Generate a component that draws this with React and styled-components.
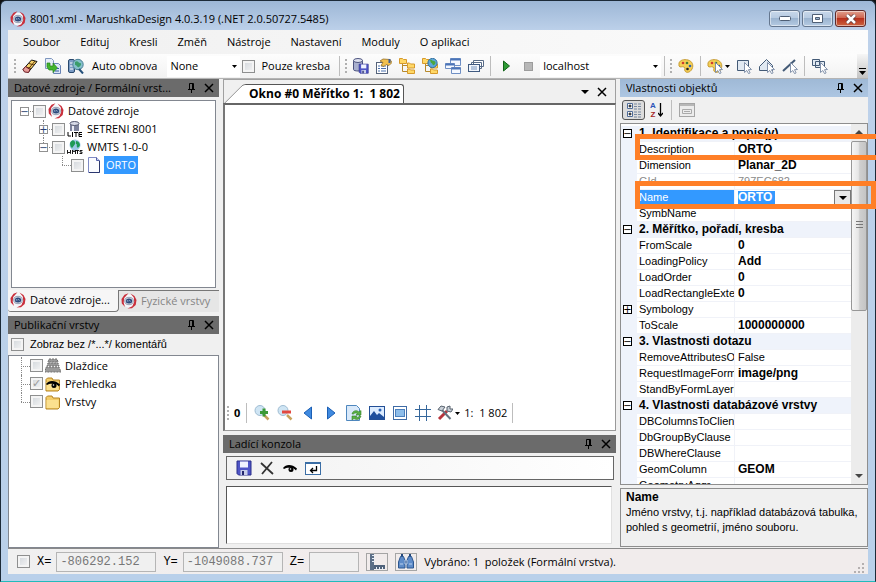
import React, { useState } from "react";
import styled, { createGlobalStyle } from "styled-components";

const MENU = ["Soubor", "Edituj", "Kresli", "Změň", "Nástroje", "Nastavení", "Moduly", "O aplikaci"];

const PROPERTIES = [
  { category: "1. Identifikace a popis(y)" },
  { name: "Description", value: "ORTO" },
  { name: "Dimension", value: "Planar_2D" },
  { name: "GId", value: "797EC682", disabled: true },
  { name: "Name", value: "ORTO", selected: true },
  { name: "SymbName", value: "" },
  { category: "2. Měřítko, pořadí, kresba" },
  { name: "FromScale", value: "0" },
  { name: "LoadingPolicy", value: "Add" },
  { name: "LoadOrder", value: "0" },
  { name: "LoadRectangleExte", value: "0" },
  { name: "Symbology", value: "", expandable: true },
  { name: "ToScale", value: "1000000000" },
  { category: "3. Vlastnosti dotazu" },
  { name: "RemoveAttributesOr", value: "False", plain: true },
  { name: "RequestImageForma", value: "image/png" },
  { name: "StandByFormLayerG", value: "" },
  { category: "4. Vlastnosti databázové vrstvy" },
  { name: "DBColumnsToClient", value: "" },
  { name: "DbGroupByClause", value: "" },
  { name: "DBWhereClause", value: "" },
  { name: "GeomColumn", value: "GEOM" },
  { name: "GeometryAggr", value: "" },
];

const Icon = ({ size = 16, children }) => (
  <svg width={size} height={size} viewBox="0 0 16 16" fill="none" aria-hidden="true">
    {children}
  </svg>
);

const LogoIcon = () => (
  <Icon>
    <circle cx="8" cy="8" r="6.500" fill="#f6f6fa" />
    <path d="M7.500.3 3.500 1.800.5 6l.3 4.500L4 14l-1.300-4.200L3.200 5z" fill="#c9303c" />
    <path d="M9.500.6 13.500 3l2 4-.8 5-3.700 3.200-4.500.3 4.800-2.300L13.200 9l-.4-4.500z" fill="#c9303c" />
    <ellipse cx="8" cy="8" rx="4.300" ry="3.700" fill="#d3d8e2" stroke="#8791a6" strokeWidth=".8" />
    <ellipse cx="8" cy="8" rx="3.200" ry="2.500" fill="#2c4a7c" />
    <path d="M6.200 8.500v-1l1 .8.9-.9 1.600 1" stroke="#b9c8e0" strokeWidth=".7" />
  </Icon>
);

const EraserIcon = () => (
  <Icon>
    <path d="M1 11.500 9.500 2l5.500 1.500L6.500 14z" fill="#f7d36b" stroke="#111" />
    <path d="m4 9 5 1.500M7 5.500l5 1.500M5.500 12 13 3" stroke="#5c3608" />
    <path d="m1 11.500 2.500-3 4.500 3L6.500 14.500l-4-.5z" fill="#e59a97" stroke="#6d1d24" />
  </Icon>
);

const CopyIcon = () => (
  <Icon>
    <path d="M.5.500h6l2 2v8h-8z" fill="#e6edf8" stroke="#7e96be" />
    <path d="M8.500 5.500h5l2 2v8h-7z" fill="#dbe6f8" stroke="#6883b5" />
    <path d="M2 5h3v3h3V5l4.500 5L8 14.500V12H4L2 9z" fill="#43b52c" stroke="#23811a" strokeWidth=".7" />
    <path d="M10 13h4M12 10.500h2" stroke="#345a9c" />
  </Icon>
);

const RefreshMapIcon = () => (
  <Icon>
    <rect x=".5" y="1.500" width="6" height="13" rx="1.500" fill="#7b9cc5" stroke="#28486d" />
    <path d="M2 5h3M2 8h3M2 11h3" stroke="#fff" />
    <circle cx="10" cy="6.500" r="5.200" fill="#86c0cc" stroke="#4b7f96" />
    <path d="M7 4c3-2 3 1 5 1s1 3-1 4-2-2-4-2z" fill="#3a9c6a" />
    <path d="m11 11 4 4.500" stroke="#24507a" strokeWidth="2" />
  </Icon>
);

const Disk = ({ x = 0, y = 0, s = 1 }) => (
  <g transform={`translate(${x} ${y}) scale(${s})`}>
    <path d="M1 1h14v14H2.500L1 13.500z" fill="#4f55c6" stroke="#2b2f8b" />
    <path d="M4 1.500h8v6H4z" fill="#f0f3ff" />
    <path d="M4.500 10h7v5h-7z" fill="#c8cee8" />
    <path d="M6 11h2v4H6z" fill="#24276d" />
  </g>
);

const SaveDbIcon = () => (
  <Icon>
    <path d="M.5 2.500v9c0 2 9 2 9 0v-9z" fill="#a9b0cf" stroke="#4d547f" />
    <ellipse cx="5" cy="2.500" rx="4.500" ry="2" fill="#dfe2ef" stroke="#4d547f" />
    <Disk x={5.5} y={5.5} s={0.65} />
  </Icon>
);

const PropsIcon = () => (
  <Icon>
    <rect x=".5" y="4.500" width="11" height="11" fill="#fff" stroke="#55637a" />
    <path d="M2 8h2m1 0h5M2 10.500h2m1 0h5M2 13h2m1 0h5" stroke="#4a70ad" />
    <path d="m4 3 3-2 7 .5 2 3-3 3-3-1-2 2-3-1 2-3z" fill="#f2c04d" stroke="#94702b" strokeWidth=".8" />
    <path d="M13.500 1v4" stroke="#3f5c96" strokeWidth="2" />
  </Icon>
);

const TreeIcon = ({ globe }) => (
  <Icon>
    <path d="M3.500 4v9.500H10M3.500 7.500H10" stroke="#b78a2c" />
    <path d="M.5.500h3l1 1h3v4h-7zM8.500 5h2l1 1h4v4h-7zM8.500 11h2l1 1h4v3.500h-7z" fill="#ffd867" stroke="#d69a2c" />
    {globe && (
      <>
        <circle cx="10.500" cy="5" r="4.600" fill="#5fa7dc" stroke="#2f6f9f" />
        <path d="M8 2c2-1 2 1 4 1s2 3 0 4-1-2-3-2z" fill="#4ca63f" />
      </>
    )}
  </Icon>
);

const WindowsIcon = () => (
  <Icon>
    <path d="M5.500.500h10v7h-10z" fill="#f4f8ff" stroke="#6f8fc4" />
    <path d="M5.500 1.500h10" stroke="#4b74b8" strokeWidth="2" />
    <path d="M.5 5.500h9v5h-9zM6.500 9.500h9v6h-9z" fill="#f4f8ff" stroke="#6f8fc4" />
    <path d="M.5 6.500h9M6.500 10.500h9" stroke="#4b74b8" strokeWidth="2" />
  </Icon>
);

const CascadeIcon = () => (
  <Icon>
    <path d="M5.500 2.500h10v6h-10zM3.500 4.500h10v6h-10z" fill="#fff" stroke="#586b86" />
    <rect x=".5" y="6.500" width="11" height="7" fill="#f2f6fc" stroke="#405a80" />
    <path d="M3 9h6M3 11h6" stroke="#7793bd" />
  </Icon>
);

const PlayIcon = () => (
  <Icon>
    <path d="M5.500 3v10l6-5z" fill="#2e9b35" stroke="#136419" />
  </Icon>
);

const StopIcon = () => (
  <Icon>
    <rect x="3.500" y="4.500" width="8" height="8" fill="#b7b7b7" stroke="#9c9c9c" />
  </Icon>
);

const Cursor = () => <path d="M8.500 4.500v10l2.300-2 1.800 3.200 1.500-.8-1.600-3.200 3-.2z" fill="#fff" stroke="#7788a3" strokeWidth=".9" />;

const PaletteIcon = ({ cursor }) => (
  <Icon>
    <path d="M1 5c1-3 5-4 9-3s6 5 4 9-6 4-7 2 1-3-1-4-4 1-5-1z" fill="#f5cf55" stroke="#c79c33" />
    <circle cx="5" cy="5" r="1.300" fill="#cf3b30" />
    <circle cx="9" cy="5" r="1.300" fill="#447a31" />
    <circle cx="12" cy="8" r="1.300" fill="#2c62b4" />
    <circle cx="9.500" cy="11" r="1.300" fill="#222" />
    {cursor && <Cursor />}
  </Icon>
);

const SelectIcon = ({ shape, line }) => (
  <Icon>
    <path d={shape} fill={line ? "none" : "#e1e9f2"} stroke="#435a76" strokeWidth={line ? 2 : 1} />
    <Cursor />
  </Icon>
);

const PinIcon = () => (
  <svg width="9" height="10" viewBox="0 0 9 10" fill="none" aria-hidden="true">
    <path d="M2.500 6V.5h4V6M5.500 1v5M1 6.500h7M4.500 7v3" stroke="#000" />
  </svg>
);

const CrossIcon = () => (
  <svg width="10" height="10" viewBox="0 0 10 10" fill="none" aria-hidden="true">
    <path d="m1 1 8 8M9 1 1 9" stroke="#000" strokeWidth="1.500" />
  </svg>
);

const CaretIcon = ({ wide }) => (
  <svg width={wide ? 8 : 5} height={wide ? 4 : 3} viewBox="0 0 8 4" preserveAspectRatio="none" aria-hidden="true">
    <path d="M0 0h8L4 4z" fill="#000" />
  </svg>
);

const EyeShape = () => (
  <>
    <path d="M1 8c3-4 9-4 14 .5l-1 2c-2-2-3-2.500-5-2.500-3-.5-5 0-7 1z" fill="#000" />
    <circle cx="9" cy="9.500" r="2.500" fill="#000" />
    <circle cx="8.500" cy="9" r=".8" fill="#fff" />
  </>
);

const LiteIcon = () => (
  <Icon>
    <path d="M3 2v8h9V2z" fill="#7d829c" />
    <path d="M5 3v7h2V3z" fill="#eceef7" />
    <ellipse cx="7.500" cy="2.500" rx="4.500" ry="2" fill="#d8dbe8" stroke="#52566e" />
    <path d="M1 11v4h3M5.500 11v5M7 11.500h4M9 11v5M15 11.500h-3v4h3M12 13.500h3" stroke="#000" />
  </Icon>
);

const WmtsIcon = () => (
  <Icon>
    <circle cx="8" cy="6" r="5.500" fill="#9bc8e6" />
    <path d="M3 4c2-4 4-3 5-1s-1 3-2 5-3 0-3-4zM9 2c3 0 4 3 4 4s-2 4-3 2 1-2-1-3z" fill="#1d9a56" />
    <path d="M.5 11v3.500L2 13l1.500 1.500V11M5.500 15v-4l1.500 2 1.500-2v4M9 11.500h3m-1.500 0V15M15.500 11.500H13v1.500h2v1.500h-2.500" stroke="#000" strokeWidth=".9" />
  </Icon>
);

const PageIcon = () => (
  <Icon>
    <path d="M2.500.500h8l3 3v12h-11z" fill="#fbfcff" stroke="#7f8ac4" />
    <path d="M10.500.500v3h3" fill="#c8d0f0" stroke="#5360a8" />
    <path d="M13.500 4v11.500H3" stroke="#2b376f" />
  </Icon>
);

const LayersIcon = () => (
  <Icon>
    <path d="M4 1h8l1 3H3zM3 5h10l1 3H2zM1 9h13l2 5H0z" fill="#9a9a9a" stroke="#707070" strokeDasharray="2 1" />
  </Icon>
);

const FolderIcon = ({ eye }) => (
  <Icon>
    <path d="M1 3.500 2.500 2H7l1 2h6.500v9.500L13 15H1z" fill="#f3cd6a" stroke="#b58422" />
    <path d="M1.500 6h12v8h-12z" fill="#fbe08f" />
    {eye && <EyeShape />}
  </Icon>
);

const ZoomIcon = ({ minus }) => (
  <Icon>
    <circle cx="6" cy="5.500" r="5" fill="#cfe5f4" stroke="#9fbcd2" />
    <path d="m10 10 4.500 4.500" stroke="#c8a25c" strokeWidth="2.500" />
    {minus ? (
      <path d="M5 5.500h9v3H5z" fill="#e2483f" />
    ) : (
      <path d="M8.500 3.500h3V6H14v3h-2.500v2.500h-3V9H6V6h2.500z" fill="#3c9a37" />
    )}
  </Icon>
);

const ArrowIcon = ({ left }) => (
  <Icon>
    <path d={left ? "M11.500 2v12L4 8z" : "M4.500 2v12L12 8z"} fill="#3f8ae0" stroke="#1c5fb4" />
  </Icon>
);

const RefreshPageIcon = () => (
  <Icon>
    <path d="M.5.500h10l3 3v12H.500z" fill="#d9e9fa" stroke="#4e87be" />
    <path d="M6 9c1-4 5-4 7-2l2-1.500v4.500h-5l1.500-1.500c-2-1-3-.5-4 .5z" fill="#5ab145" stroke="#36812a" strokeWidth=".6" />
    <path d="M15 11c-1 4-5 4-7 2.500L6 15v-4h5L9.500 12c2 1 3 0 4-1z" fill="#5ab145" stroke="#36812a" strokeWidth=".6" />
  </Icon>
);

const ImageIcon = () => (
  <Icon>
    <rect x=".5" y="1.500" width="15" height="13" fill="#dcecff" stroke="#234f96" />
    <path d="m1 11 4-5 3 4 2-2 5 4v2H1z" fill="#1f4f9d" />
    <circle cx="11" cy="5" r="1.500" fill="#2c62b5" />
  </Icon>
);

const FrameIcon = () => (
  <Icon>
    <rect x="1.500" y="1.500" width="13" height="13" fill="#fff" stroke="#3f6ba5" />
    <rect x="3.500" y="4.500" width="9" height="7" fill="#8dbdea" stroke="#4c80bd" />
  </Icon>
);

const GridIcon = () => (
  <Icon>
    <path d="M4.500 0v16M11.500 0v16M0 4.500h16M0 11.500h16" stroke="#35679c" />
  </Icon>
);

const ToolsIcon = () => (
  <Icon>
    <path d="m2 14 8-8" stroke="#b7343c" strokeWidth="3" />
    <path d="m4 4 9.500 10" stroke="#66727f" strokeWidth="2" />
    <path d="M1 4.500 4 1l4 1-3 4zM10 2l3-1v3h3l-2 3-4-1z" fill="#c9d0d8" stroke="#59636f" />
  </Icon>
);

const WrapIcon = () => (
  <Icon>
    <rect x=".5" y="2.500" width="15" height="12" fill="#fff" stroke="#3b6ea5" />
    <path d="M0 3h16" stroke="#3b6ea5" strokeWidth="2" />
    <path d="M11.500 6v4.500H6M8 8l-2.500 2.500L8 13" stroke="#000" strokeWidth="1.300" />
  </Icon>
);

const RulerIcon = () => (
  <Icon>
    <path d="M1 0h4v16H1z" fill="#5c6f87" />
    <path d="M3 1.500h3M3 4.500h3M3 7.500h3" stroke="#e8eef6" />
    <path d="M5 11h11v4H5z" fill="#4f627b" />
    <path d="M7.500 13v3M10.500 13v3M13.500 13v3" stroke="#e8eef6" />
  </Icon>
);

const BinocularsIcon = () => (
  <Icon>
    <path d="M2.500 2.500h3l1.500 4v7.500H.500V8zM13.500 2.500h-3L9 6.500V14h6.500V8z" fill="#5f8cc9" stroke="#2d568f" />
    <path d="M7 6h2v4H7zM2 10h3M11 10h3" fill="#22477c" stroke="#bcd1ee" />
    <path d="M3 1h2M11 1h2" stroke="#22477c" strokeWidth="2" />
  </Icon>
);

function Panel({ title, active, children }) {
  return (
    <>
      <PanelHeader $active={active}>
        <PanelTitle>{title}</PanelTitle>
        <PanelButton aria-label="Připnout">
          <PinIcon />
        </PanelButton>
        <PanelButton aria-label="Zavřít">
          <CrossIcon />
        </PanelButton>
      </PanelHeader>
      {children}
    </>
  );
}

function TreeRow({ level, expander, line, icon, label, selected, checked, disabled }) {
  return (
    <TreeItem $level={level}>
      <Guide $line={line}>{expander && <Expander aria-label={label}>{expander}</Expander>}</Guide>
      <TreeLabel>
        <CheckBox type="checkbox" defaultChecked={checked} disabled={disabled} />
        {icon}
        <TreeText $selected={selected}>{label}</TreeText>
      </TreeLabel>
    </TreeItem>
  );
}

function PropertyGrid() {
  return (
    <PropertyTable>
      <colgroup>
        <col width="16" />
        <col width="97" />
        <col />
      </colgroup>
      <tbody>
        {PROPERTIES.map((p) =>
          p.category ? (
            <CategoryRow key={p.category}>
              <Gutter>
                <Expander $dark aria-label={p.category}>−</Expander>
              </Gutter>
              <th colSpan={2}>{p.category}</th>
            </CategoryRow>
          ) : (
            <PropertyRow key={p.name} $selected={p.selected} $disabled={p.disabled}>
              <Gutter>{p.expandable && <Expander $dark aria-label={p.name}>+</Expander>}</Gutter>
              <th scope="row">{p.name}</th>
              <ValueCell $plain={p.plain || p.disabled}>
                {p.selected ? (
                  <ValueEditor>
                    <ValueInput aria-label={p.name} defaultValue={p.value} />
                    <DropButton aria-label="Rozbalit">
                      <CaretIcon wide />
                    </DropButton>
                  </ValueEditor>
                ) : (
                  p.value
                )}
              </ValueCell>
            </PropertyRow>
          )
        )}
      </tbody>
    </PropertyTable>
  );
}

function App() {
  const [onlyDrawing, setOnlyDrawing] = useState(false);

  return (
    <>
      <GlobalStyle />
      <Window>
        <TitleBar>
          <LogoIcon />
          <Title>8001.xml - MarushkaDesign 4.0.3.19 (.NET 2.0.50727.5485)</Title>
          <CaptionButton aria-label="Minimalizovat">
            <svg width="12" height="6" aria-hidden="true">
              <rect x=".5" y=".5" width="11" height="4" rx="1" fill="#fff" stroke="#4f5f75" />
            </svg>
          </CaptionButton>
          <CaptionButton aria-label="Maximalizovat">
            <svg width="11" height="9" aria-hidden="true">
              <path d="M.5.500h10v8H.500zM3.500 3.500h4v2h-4z" fill="#fff" fillRule="evenodd" stroke="#4f5f75" />
            </svg>
          </CaptionButton>
          <CaptionButton $close aria-label="Zavřít okno">
            <svg width="12" height="10" aria-hidden="true">
              <path d="m2 1 8 8M10 1 2 9" stroke="#5b3a3a" strokeWidth="4" />
              <path d="m2 1 8 8M10 1 2 9" stroke="#fff" strokeWidth="2.500" />
            </svg>
          </CaptionButton>
        </TitleBar>

        <Client>
          <MenuBar>
            {MENU.map((item) => (
              <MenuButton key={item}>{item}</MenuButton>
            ))}
          </MenuBar>

          <ToolBar>
            <Grip />
            <ToolButton aria-label="Guma"><EraserIcon /></ToolButton>
            <ToolButton aria-label="Kopírovat"><CopyIcon /></ToolButton>
            <ToolButton aria-label="Obnovit"><RefreshMapIcon /></ToolButton>
            <ToolLabel htmlFor="refresh">Auto obnova</ToolLabel>
            <ComboBox $width={73}>
              <select id="refresh">
                <option>None</option>
              </select>
              <CaretIcon />
            </ComboBox>
            <CheckLabel>
              <CheckBox type="checkbox" checked={onlyDrawing} onChange={() => setOnlyDrawing(!onlyDrawing)} />
              Pouze kresba
            </CheckLabel>
            <Separator />
            <Grip />
            <ToolButton aria-label="Uložit"><SaveDbIcon /></ToolButton>
            <ToolButton aria-label="Vlastnosti"><PropsIcon /></ToolButton>
            <ToolButton aria-label="Strom"><TreeIcon /></ToolButton>
            <ToolButton aria-label="Strom map"><TreeIcon globe /></ToolButton>
            <ToolButton aria-label="Okna"><WindowsIcon /></ToolButton>
            <ToolButton aria-label="Kaskáda"><CascadeIcon /></ToolButton>
            <Separator />
            <ToolButton aria-label="Spustit"><PlayIcon /></ToolButton>
            <ToolButton aria-label="Zastavit"><StopIcon /></ToolButton>
            <ComboBox $width={121}>
              <select aria-label="Server">
                <option>localhost</option>
              </select>
              <CaretIcon />
            </ComboBox>
            <Separator />
            <Grip />
            <ToolButton aria-label="Paleta"><PaletteIcon /></ToolButton>
            <Separator />
            <ToolButton $wide aria-label="Výběr">
              <PaletteIcon cursor />
              <CaretIcon />
            </ToolButton>
            <ToolButton aria-label="Výběr oknem"><SelectIcon shape="M1.500 2.500h11v10h-11z" /></ToolButton>
            <ToolButton aria-label="Výběr plochou"><SelectIcon shape="M.5 8.500l7-7 6 6v5h-13z" /></ToolButton>
            <ToolButton aria-label="Výběr linií"><SelectIcon line shape="M1 13 13 2" /></ToolButton>
            <Separator />
            <ToolButton aria-label="Výběr vrstev"><SelectIcon shape="M.5 1.500h7v6h-7zM3.500 3.500h9v6h-9z" /></ToolButton>
            <Overflow aria-label="Další">
              <svg width="7" height="8" aria-hidden="true">
                <path d="M0 1.500h7" stroke="#000" />
                <path d="M0 4h7L3.500 8z" fill="#000" />
              </svg>
            </Overflow>
          </ToolBar>

          <Workspace>
            <Column>
              <Panel title="Datové zdroje / Formální vrst...">
                <TreeBox $inset>
                  <TreeRow level={0} expander="−" icon={<LogoIcon />} label="Datové zdroje" />
                  <TreeRow level={1} expander="+" line="full" icon={<LiteIcon />} label="SETRENI 8001" />
                  <TreeRow level={1} expander="−" line="half" icon={<WmtsIcon />} label="WMTS 1-0-0" />
                  <TreeRow level={2} line="half" icon={<PageIcon />} label="ORTO" selected />
                </TreeBox>
              </Panel>
              <BottomTabs>
                <BottomTab $active>
                  <LogoIcon />
                  Datové zdroje...
                </BottomTab>
                <BottomTab>
                  <LogoIcon />
                  Fyzické vrstvy
                </BottomTab>
              </BottomTabs>
              <Panel title="Publikační vrstvy">
                <CommentsLabel>
                  <CheckBox type="checkbox" />
                  Zobraz bez /*...*/ komentářů
                </CommentsLabel>
                <TreeBox>
                  <TreeRow level={0} line="full" icon={<LayersIcon />} label="Dlaždice" />
                  <TreeRow level={0} line="full" icon={<FolderIcon eye />} label="Přehledka" checked disabled />
                  <TreeRow level={0} line="half" icon={<FolderIcon />} label="Vrstvy" />
                </TreeBox>
              </Panel>
            </Column>

            <Column>
              <DocumentTabs>
                <DocumentTab>Okno #0 Měřítko 1:&nbsp; 1 802</DocumentTab>
                <PanelButton aria-label="Seznam oken"><CaretIcon wide /></PanelButton>
                <PanelButton aria-label="Zavřít okno mapy"><CrossIcon /></PanelButton>
              </DocumentTabs>
              <MapFrame>
                <Canvas />
                <MapTools>
                  <Grip />
                  <MapCount>0</MapCount>
                  <Separator />
                  <ToolButton aria-label="Přiblížit"><ZoomIcon /></ToolButton>
                  <ToolButton aria-label="Oddálit"><ZoomIcon minus /></ToolButton>
                  <ToolButton aria-label="Zpět"><ArrowIcon left /></ToolButton>
                  <ToolButton aria-label="Vpřed"><ArrowIcon /></ToolButton>
                  <ToolButton aria-label="Překreslit"><RefreshPageIcon /></ToolButton>
                  <ToolButton aria-label="Obrázek"><ImageIcon /></ToolButton>
                  <ToolButton aria-label="Celé okno"><FrameIcon /></ToolButton>
                  <ToolButton aria-label="Mřížka"><GridIcon /></ToolButton>
                  <ToolButton $wide aria-label="Nástroje mapy">
                    <ToolsIcon />
                    <CaretIcon />
                  </ToolButton>
                  <MapScale>1:&nbsp; 1 802</MapScale>
                  <Separator />
                </MapTools>
              </MapFrame>
              <Panel title="Ladící konzola">
                <ConsoleTools>
                  <ToolButton aria-label="Uložit výpis"><Icon><Disk /></Icon></ToolButton>
                  <ToolButton aria-label="Smazat">
                    <Icon><path d="m2 3 12 11M13 2 3 14" stroke="#333" strokeWidth="1.800" /></Icon>
                  </ToolButton>
                  <ToolButton aria-label="Sledovat"><Icon><EyeShape /></Icon></ToolButton>
                  <ToolButton aria-label="Zalomit"><WrapIcon /></ToolButton>
                </ConsoleTools>
                <ConsoleText aria-label="Výpis konzoly" />
              </Panel>
            </Column>

            <PropertyColumn>
              <Panel title="Vlastnosti objektů" active>
                <PropertyTools>
                  <ToolButton $pressed aria-label="Podle kategorií">
                    <Icon>
                      <path d="M1.500 1.500h5v5h-5zM1.500 9.500h5v5h-5z" fill="#fff" stroke="#506c98" />
                      <path d="M2.500 4h3M4 2.500v3M2.500 12h3M4 10.500v3" stroke="#000" />
                      <path d="M8 2h3m1 0h3M8 4.500h3m1 0h3M8 7h3m1 0h3M8 10h3m1 0h3M8 12.500h3m1 0h3M8 15h3m1 0h3" stroke="#76879f" />
                    </Icon>
                  </ToolButton>
                  <ToolButton aria-label="Podle abecedy">
                    <SortLetters>
                      <span>A</span>
                      <span>Z</span>
                    </SortLetters>
                    <svg width="5" height="16" fill="none" aria-hidden="true">
                      <path d="M2.500 1v13M0 11l2.500 3L5 11" stroke="#000" strokeWidth="1.300" />
                    </svg>
                  </ToolButton>
                  <Separator />
                  <ToolButton aria-label="Stránky vlastností" disabled>
                    <Icon>
                      <rect x=".5" y="1.500" width="15" height="13" fill="#ececec" stroke="#a5a5a5" />
                      <path d="M1 3h14" stroke="#b7b7b7" strokeWidth="2" />
                      <path d="M3.500 7.500h9v4h-9zM5 9.500h6" stroke="#aaa" />
                    </Icon>
                  </ToolButton>
                </PropertyTools>
                <GridBox>
                  <PropertyGrid />
                  <ScrollBar>
                    <ScrollArrow>
                      <CaretIcon wide />
                    </ScrollArrow>
                    <ScrollThumb />
                    <ScrollSpace />
                    <ScrollArrow $down>
                      <CaretIcon wide />
                    </ScrollArrow>
                  </ScrollBar>
                </GridBox>
                <HelpBox>
                  <h2>Name</h2>
                  <p>Jméno vrstvy, t.j. například databázová tabulka, pohled s geometrií, jméno souboru.</p>
                </HelpBox>
              </Panel>
              <Highlight $top={55} $height={26} $right={-20} />
              <Highlight $top={102} $height={28} $right={-8} />
            </PropertyColumn>
          </Workspace>

          <StatusBar>
            <CheckBox type="checkbox" aria-label="Zadat souřadnice" />
            <CoordLabel>
              X=
              <CoordInput $width={100} readOnly value="-806292.152" />
            </CoordLabel>
            <CoordLabel>
              Y=
              <CoordInput $width={100} readOnly value="-1049088.737" />
            </CoordLabel>
            <CoordLabel>
              Z=
              <CoordInput $width={50} readOnly value="" />
            </CoordLabel>
            <StatusButton aria-label="Měření"><RulerIcon /></StatusButton>
            <StatusButton aria-label="Hledat"><BinocularsIcon /></StatusButton>
            <StatusText>Vybráno: 1&nbsp; položek (Formální vrstva).</StatusText>
            <svg width="12" height="12" aria-hidden="true">
              <path d="M8 1h2v2H8zM8 5h2v2H8zM8 9h2v2H8zM4 5h2v2H4zM4 9h2v2H4zM0 9h2v2H0z" fill="#b5b0b0" />
            </svg>
          </StatusBar>
        </Client>
      </Window>
    </>
  );
}

export default App;

const GlobalStyle = createGlobalStyle`
  * {
    box-sizing: border-box;
  }

  body {
    margin: 0;
    overflow: hidden;
    background: #111;
    color: #000;
    font: 11px/16px "Open Sans", "Noto Sans", sans-serif;
  }

  button,
  input,
  select,
  textarea {
    margin: 0;
    padding: 0;
    border: 0;
    border-radius: 0;
    background: none;
    color: inherit;
    font: inherit;
  }

  svg {
    flex: none;
    display: block;
  }
`;

const Window = styled.div`
  display: flex;
  flex-direction: column;
  height: 100vh;
  padding: 0 7px 7px;
  border: 1px solid #1c2a38;
  border-bottom-color: #2bb;
  border-radius: 6px 6px 0 0;
  background: linear-gradient(#9db7d6, #bdd1ea 30px, #b9d0ea);
`;

const TitleBar = styled.header`
  display: flex;
  align-items: center;
  gap: 2px;
  height: 29px;
  padding: 6px 2px 0;
`;

const Title = styled.h1`
  flex: 1;
  margin: 0;
  padding-left: 2px;
  font-size: 11px;
  font-weight: 400;
  white-space: nowrap;
`;

const CaptionButton = styled.button`
  display: flex;
  align-items: center;
  justify-content: center;
  width: 31px;
  height: 17px;
  border: 1px solid ${(props) => (props.$close ? "#5e2a2a" : "#65778f")};
  border-radius: 3px;
  background: ${(props) =>
    props.$close
      ? "linear-gradient(#e0a08e, #cf6650 45%, #b8311d 50%, #cc6440)"
      : "linear-gradient(#c8d8ea, #b7cbe2 45%, #9bb4d0 50%, #b5cae2)"};
  box-shadow: inset 0 0 0 1px rgba(255, 255, 255, 0.5);
`;

const Client = styled.div`
  display: flex;
  flex-direction: column;
  flex: 1;
  min-height: 0;
  background: #f0f0f0;
`;

const MenuBar = styled.nav`
  display: flex;
  height: 24px;
  padding-left: 5px;
  background: linear-gradient(90deg, #f0f0f0, #fcfcfc);
`;

const MenuButton = styled.button`
  padding: 0 10px;
`;

const ToolBar = styled.div`
  display: flex;
  align-items: center;
  height: 25px;
  padding-left: 4px;
  border-bottom: 1px solid #b4b4b4;
  background: linear-gradient(#fdfdfd, #f2f2f2);
`;

const Grip = styled.span`
  flex: none;
  width: 2px;
  height: 14px;
  margin: 0 2px;
  background: repeating-linear-gradient(#b0b0b0 0 2px, transparent 2px 4px);
`;

const ToolButton = styled.button`
  display: flex;
  flex: none;
  align-items: center;
  justify-content: center;
  gap: 2px;
  width: ${(props) => (props.$wide ? 28 : 23)}px;
  height: 20px;
  border: 1px solid ${(props) => (props.$pressed ? "#555" : "transparent")};
  border-radius: 3px;
  background: ${(props) => (props.$pressed ? "#dcdcdc" : "none")};
`;

const ToolLabel = styled.label`
  padding: 0 10px 0 5px;
  white-space: nowrap;
`;

const ComboBox = styled.div`
  display: flex;
  flex: none;
  align-items: center;
  width: ${(props) => props.$width}px;
  height: 21px;
  padding-right: 3px;
  background: #fff;

  select {
    flex: 1;
    height: 21px;
    padding-left: 3px;
    appearance: none;
  }
`;

const CheckBox = styled.input`
  flex: none;
  width: 13px;
  height: 13px;
  border: 1px solid #8e8f8f;
  background: linear-gradient(135deg, #d0d5da, #f6f6f6);
  box-shadow: inset 0 0 0 2px #f4f4f4;
  appearance: none;

  &:checked::before {
    content: "✓";
    display: block;
    color: #999;
    font: bold 11px/11px "DejaVu Sans", sans-serif;
    text-align: center;
  }
`;

const CheckLabel = styled.label`
  display: flex;
  align-items: center;
  gap: 6px;
  padding: 0 6px 0 2px;
  white-space: nowrap;
`;

const Separator = styled.span`
  flex: none;
  width: 1px;
  height: 20px;
  margin: 0 3px;
  background: #bdbdbd;
`;

const Overflow = styled.button`
  display: flex;
  align-items: flex-end;
  justify-content: center;
  align-self: stretch;
  width: 11px;
  margin-left: auto;
  padding-bottom: 3px;
  background: linear-gradient(#f6f6f6, #c4c4c4);
`;

const Workspace = styled.main`
  display: grid;
  grid-template-columns: 211px minmax(0, 1fr) 248px;
  gap: 4px;
  flex: 1;
  min-height: 0;
`;

const Column = styled.section`
  display: flex;
  flex-direction: column;
  min-width: 0;
  min-height: 0;
`;

const PropertyColumn = styled(Column)`
  position: relative;
`;

const PanelHeader = styled.div`
  display: flex;
  flex: none;
  align-items: center;
  height: 18px;
  padding: 0 2px 0 6px;
  background: ${(props) => (props.$active ? "linear-gradient(#9fb9d6, #adc6e2)" : "#6b6b6b")};
`;

const PanelTitle = styled.h2`
  flex: 1;
  margin: 0;
  overflow: hidden;
  font-size: 11px;
  font-weight: 400;
  white-space: nowrap;
`;

const PanelButton = styled.button`
  display: flex;
  flex: none;
  align-items: center;
  justify-content: center;
  width: 17px;
  height: 16px;
`;

const TreeBox = styled.ul`
  flex: ${(props) => (props.$inset ? 187 : 193)} 1 0;
  min-height: 0;
  margin: ${(props) => (props.$inset ? "3px 3px 2px" : "0")};
  padding: 1px 0 0 8px;
  border: 1px solid #828790;
  background: #fff;
  list-style: none;
`;

const TreeItem = styled.li`
  display: flex;
  align-items: center;
  height: 18px;
  padding-left: ${(props) => props.$level * 19}px;
`;

const Guide = styled.span`
  position: relative;
  display: flex;
  flex: none;
  align-items: center;
  width: 13px;
  height: 18px;

  &::before {
    content: "";
    position: absolute;
    top: 0;
    left: 4px;
    height: ${(props) => (props.$line === "full" ? 18 : 9)}px;
    border-left: ${(props) => (props.$line ? "1px dotted #888" : "0")};
  }

  &::after {
    content: "";
    position: absolute;
    top: 9px;
    left: 4px;
    right: 0;
    border-top: 1px dotted #888;
  }
`;

const Expander = styled.button`
  position: relative;
  z-index: 1;
  display: flex;
  align-items: center;
  justify-content: center;
  width: 9px;
  height: 9px;
  border: 1px solid ${(props) => (props.$dark ? "#000" : "#919191")};
  background: #fff;
  color: ${(props) => (props.$dark ? "#000" : "#2a3f73")};
  font: 10px/7px "DejaVu Sans", sans-serif;
`;

const TreeLabel = styled.label`
  display: flex;
  align-items: center;
  gap: 2px;
`;

const TreeText = styled.span`
  padding: 0 2px;
  background: ${(props) => (props.$selected ? "#3399ff" : "none")};
  color: ${(props) => (props.$selected ? "#fff" : "#000")};
  line-height: 18px;
  white-space: nowrap;
`;

const BottomTabs = styled.div`
  display: flex;
  flex: none;
  height: 22px;
  margin-bottom: 4px;
`;

const BottomTab = styled.button`
  display: flex;
  align-items: center;
  gap: 4px;
  width: ${(props) => (props.$active ? 111 : 100)}px;
  padding-left: 2px;
  border: 0 solid #777;
  border-width: ${(props) => (props.$active ? "0 1px 1px 0" : "1px 0 0")};
  border-radius: ${(props) => (props.$active ? "0 0 4px 3px" : "0")};
  background: ${(props) => (props.$active ? "#f6f6f6" : "#e6e6e6")};
  color: ${(props) => (props.$active ? "#000" : "#858585")};
  white-space: nowrap;
`;

const CommentsLabel = styled.label`
  display: flex;
  flex: none;
  align-items: center;
  gap: 6px;
  height: 21px;
  padding-left: 3px;
  font: 11px/16px "Liberation Sans", Arial, sans-serif;
`;

const DocumentTabs = styled.div`
  display: flex;
  flex: none;
  align-items: center;
  height: 24px;
  padding-right: 5px;
  border: 1px solid #a0a0a0;
  border-bottom: 0;
`;

const DocumentTab = styled.h2`
  position: relative;
  z-index: 0;
  align-self: flex-end;
  margin: 0 auto 0 0;
  padding: 0 4px 0 25px;
  font-size: 12px;
  font-weight: 700;
  line-height: 19px;
  white-space: nowrap;

  &::before {
    content: "";
    position: absolute;
    z-index: -1;
    inset: 0 50% 0 0;
    border: 1px solid #555;
    border-width: 1px 0 0 1px;
    border-radius: 3px 0 0;
    background: #fff;
    transform: skewX(-45deg);
    transform-origin: bottom left;
  }

  &::after {
    content: "";
    position: absolute;
    z-index: -1;
    inset: 0 0 0 50%;
    border: 1px solid #555;
    border-width: 1px 1px 0 0;
    border-radius: 0 3px 0 0;
    background: #fff;
  }
`;

const MapFrame = styled.div`
  display: flex;
  flex-direction: column;
  flex: 1;
  min-height: 0;
  margin-bottom: 4px;
  border: 1px solid #999;
  border-width: 2px 1px 1px 2px;
  border-top-color: #666;
  border-left-color: #777;
  background: #fff;
`;

const Canvas = styled.div`
  flex: 1;
`;

const MapTools = styled.div`
  display: flex;
  flex: none;
  align-items: center;
  height: 24px;
  margin-bottom: 5px;
`;

const MapCount = styled.b`
  padding: 0 3px;
`;

const MapScale = styled.span`
  padding: 0 2px;
`;

const ConsoleTools = styled.div`
  display: flex;
  flex: none;
  align-items: center;
  height: 24px;
  margin: 3px 2px 6px 3px;
  padding-left: 5px;
  border: 1px solid #666;
  background: linear-gradient(90deg, #f2f2f2, #fff);
`;

const ConsoleText = styled.textarea`
  flex: none;
  height: 58px;
  margin: 0 4px 4px 3px;
  border: 1px solid #e0e0e0;
  border-top-color: #555;
  border-left-color: #555;
  background: #fff;
  resize: none;
`;

const PropertyTools = styled.div`
  display: flex;
  flex: none;
  align-items: center;
  height: 26px;
  padding-left: 2px;
`;

const SortLetters = styled.span`
  display: flex;
  flex-direction: column;
  font: bold 8px/9px "Liberation Sans", Arial, sans-serif;
  color: #2c55b8;

  span + span {
    color: #a52727;
  }
`;

const GridBox = styled.div`
  display: flex;
  flex: 1;
  align-items: stretch;
  min-height: 0;
  overflow: hidden;
  border: 1px solid #8e8e8e;
  background: #fff;
  font: 11px/15px "Liberation Sans", Arial, sans-serif;
`;

const PropertyTable = styled.table`
  flex: 1;
  align-self: flex-start;
  width: 0;
  margin-top: 2px;
  table-layout: fixed;
  border-collapse: separate;
  border-spacing: 0;

  td,
  th {
    height: 16px;
    padding: 0 0 0 2px;
    overflow: hidden;
    border-bottom: 1px solid #f0f2f8;
    text-align: left;
    white-space: nowrap;
  }
`;

const Gutter = styled.td`
  && {
    border-bottom-color: #eff3fb;
    background: #eff3fb;
  }
`;

const CategoryRow = styled.tr`
  background: #eff3fb;
  font-size: 12px;
`;

const PropertyRow = styled.tr`
  color: ${(props) => (props.$disabled ? "#8a8a8a" : "#000")};

  th {
    background: ${(props) => (props.$selected ? "#3399ff" : "#fff")};
    color: ${(props) => (props.$selected ? "#fff" : "inherit")};
    font-weight: 400;
  }
`;

const ValueCell = styled.td`
  && {
    padding-left: 3px;
    border-left: 1px solid #f0f2f8;
  }
  font-size: ${(props) => (props.$plain ? 11 : 12)}px;
  font-weight: ${(props) => (props.$plain ? 400 : 700)};
`;

const ValueEditor = styled.div`
  display: flex;
  align-items: center;
  justify-content: space-between;
  height: 15px;
`;

const ValueInput = styled.input`
  width: 37px;
  height: 13px;
  background: #3399ff;
  color: #fff;
`;

const DropButton = styled.button`
  display: flex;
  align-items: center;
  justify-content: center;
  width: 17px;
  height: 15px;
  border: 1px solid #777;
  background: #e8e8e8;
`;

const ScrollBar = styled.div`
  display: flex;
  flex: none;
  flex-direction: column;
  width: 16px;
  background: #ececec;
`;

const ScrollArrow = styled.span`
  display: flex;
  flex: none;
  align-items: center;
  justify-content: center;
  height: 17px;
  transform: ${(props) => (props.$down ? "none" : "rotate(180deg)")};
  opacity: 0.7;
`;

const ScrollThumb = styled.div`
  flex: 170 1 0;
  border: 1px solid #979797;
  border-radius: 2px;
  background: repeating-linear-gradient(#777 0 1px, transparent 1px 3px) center / 7px 9px no-repeat,
    linear-gradient(90deg, #f5f5f5, #e6e6e6 45%, #cfcfcf 55%, #c4c4c4);
`;

const ScrollSpace = styled.div`
  flex: 158 1 0;
`;

const HelpBox = styled.div`
  flex: none;
  height: 59px;
  margin: 3px 0 1px;
  padding: 1px 5px;
  border: 1px solid #8e8e8e;
  font: 11px/15px "Liberation Sans", Arial, sans-serif;

  h2 {
    margin: 0;
    font-size: 12px;
  }

  p {
    margin: 0;
  }
`;

const Highlight = styled.div`
  position: absolute;
  z-index: 2;
  top: ${(props) => props.$top}px;
  right: ${(props) => props.$right}px;
  left: 15px;
  height: ${(props) => props.$height}px;
  border: 5px solid #ff7f27;
  pointer-events: none;
`;

const StatusBar = styled.footer`
  display: flex;
  flex: none;
  align-items: center;
  gap: 7px;
  height: 26px;
  padding: 0 2px 0 9px;
  border-top: 1px solid #8a8a8a;
  background: linear-gradient(90deg, #f0f0f0, #f1ecec 40%);
  white-space: nowrap;

  > svg {
    align-self: flex-end;
  }
`;

const CoordLabel = styled.label`
  display: flex;
  align-items: center;
  gap: 5px;
  font: 12px/16px "Liberation Mono", "Courier New", monospace;
`;

const CoordInput = styled.input`
  width: ${(props) => props.$width}px;
  height: 20px;
  padding: 0 3px;
  border: 1px solid #b5b5b5;
  background: #f0f0f0;
  color: #777;
`;

const StatusButton = styled.button`
  display: flex;
  align-items: center;
  justify-content: center;
  width: 22px;
  height: 18px;
  border: 1px solid #a5a5a5;
`;

const StatusText = styled.span`
  flex: 1;
`;
